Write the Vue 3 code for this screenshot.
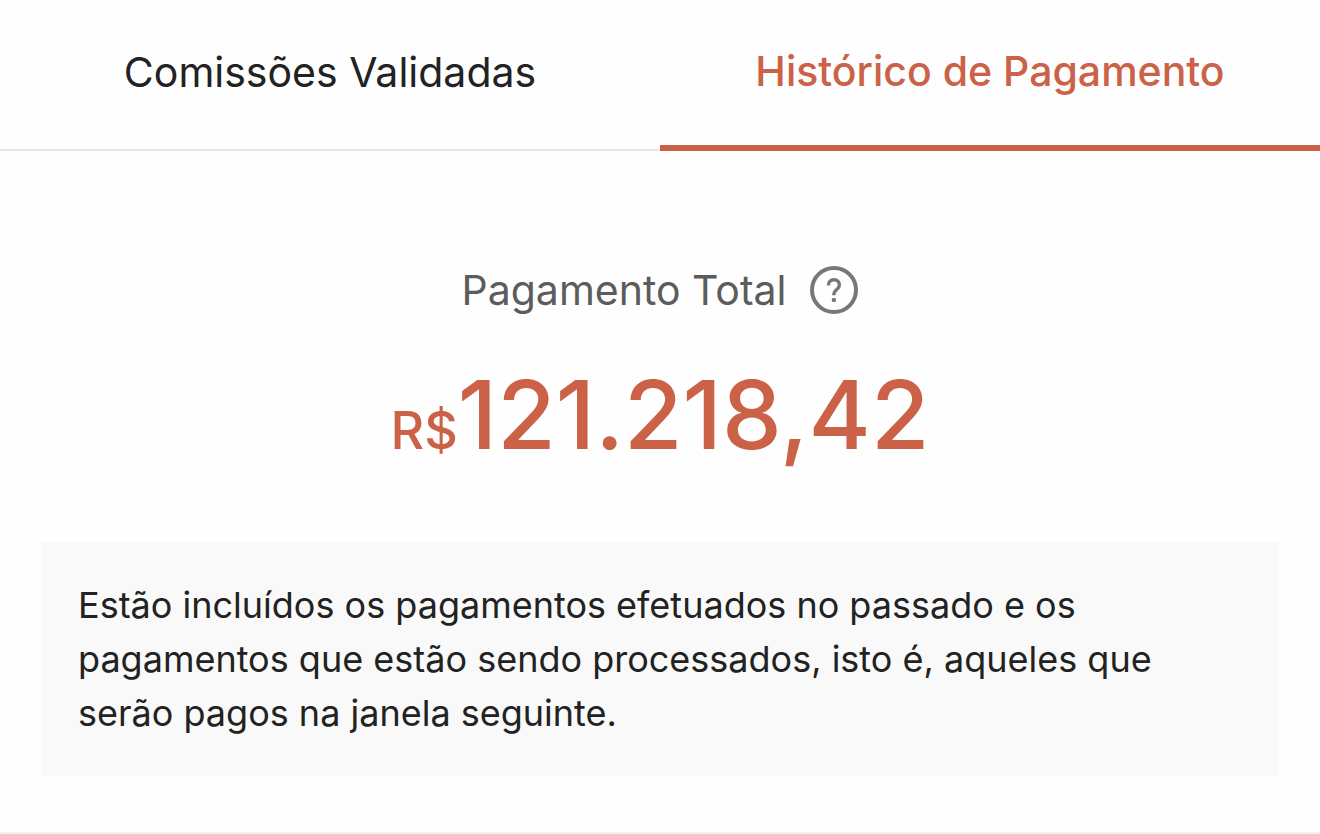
<script setup>
import { ref } from 'vue'

const tabs = ['Comissões Validadas', 'Histórico de Pagamento']
const active = ref(1)
</script>

<template>
  <main class="page">
    <nav class="tabs" role="tablist">
      <button
        v-for="(tab, i) in tabs"
        :key="tab"
        type="button"
        role="tab"
        class="tab"
        :class="{ active: active === i }"
        :aria-selected="active === i"
        @click="active = i"
      >{{ tab }}</button>
    </nav>
    <section class="summary">
      <div class="heading">
        <h1 class="title">Pagamento Total</h1>
        <button type="button" class="help" aria-label="Ajuda">
          <svg viewBox="0 0 48 48" width="48" height="48" fill="none" stroke="currentColor">
            <circle cx="24" cy="24" r="22" stroke-width="4" />
            <path d="M18.4 19.400C18.400 15.900 20.700 13.800 24 13.800c3.300 0 5.400 2.100 5.400 5.100 0 2-1 3.300-2.600 4.600-2 1.600-3 2.800-3 5.700" stroke-width="3.400" />
            <rect x="21.900" y="32" width="4" height="4" rx="1.200" fill="currentColor" stroke="none" />
          </svg>
        </button>
      </div>
      <p class="amount"><span class="currency">R$</span><span class="value">121.218,42</span></p>
      <p class="note">Estão incluídos os pagamentos efetuados no passado e os pagamentos que estão sendo processados, isto é, aqueles que serão pagos na janela seguinte.</p>
    </section>
  </main>
</template>

<style>
body {
  background: #fefefe;
}
</style>

<style scoped>
.page {
  font-family: Inter, "Liberation Sans", sans-serif;
  color: #222;
}
.tabs {
  display: grid;
  grid-template-columns: 1fr 1fr;
}
.tab {
  box-sizing: border-box;
  height: 151px;
  padding: 0 0 6px;
  border: 0;
  border-bottom: 2px solid #e8e8e8;
  background: none;
  color: #222;
  font: 400 41px/48px Inter, "Liberation Sans", sans-serif;
}
.tab.active {
  padding-bottom: 4px;
  border-bottom: 6px solid #cb6146;
  color: #cb6146;
  font-weight: 500;
}
.summary {
  padding: 115px 42px 56px;
  border-bottom: 2px solid #f2f2f2;
}
.heading {
  display: flex;
  justify-content: center;
  align-items: center;
  gap: 24px;
}
.title {
  margin: 0;
  color: #5c5c5c;
  font-size: 41px;
  font-weight: 400;
  line-height: 48px;
}
.help {
  width: 48px;
  height: 48px;
  padding: 0;
  border: 0;
  background: none;
  color: #777;
}
.help svg {
  display: block;
}
.amount {
  display: flex;
  justify-content: center;
  align-items: baseline;
  margin: 43px 0 69px;
  color: #cb6146;
  font-weight: 500;
}
.currency {
  font-size: 52px;
}
.value {
  font-size: 95px;
  line-height: 116px;
}
.note {
  margin: 0;
  padding: 36px;
  background: #f9f9f9;
  font-size: 36px;
  line-height: 54px;
}
</style>
